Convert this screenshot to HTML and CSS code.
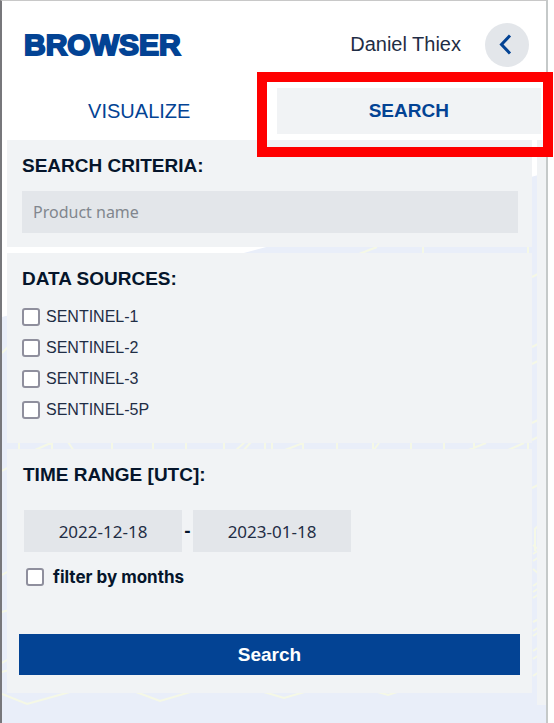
FILE: index.html
```html
<!DOCTYPE html>
<html lang="en">
<head>
<meta charset="utf-8">
<meta name="viewport" content="width=device-width, initial-scale=1">
<title>Browser</title>
<link rel="stylesheet" href="styles.css">
</head>
<body>
<div class="panel">
  <svg class="backdrop" viewBox="0 0 544 722" preserveAspectRatio="none" aria-hidden="true">
    <path fill="#e9eef9" d="M0 316 544 172V722H0Z"/>
    <g fill="none" stroke="#f5f8e6" stroke-width="2">
      <path d="M357 253l18-7M421 244v10M526 244v10M530 276l8-4M530 346l8-4M530 363l8-4M530 422l8-4M530 439l8-4M530 487l8-4M533 550v-22l4-4"/>
      <path d="M17 442v8M33 449l18-8M50 442v8M66 441l6 9M110 442v8M151 442v8M184 442v8M222 442v8M233 450l10-9M241 450l8-9M263 442v8M270 442v8M283 449l18-7v8M335 442v8M371 442v8l6-8M409 442v8M442 442v8M464 450l20-8M472 442v8M506 449l16-7M526 442v8"/>
      <path d="M0 352l6-6M0 470l7-4M0 574l7-4M0 611l7-2M0 662l7-4M0 671l7-2"/>
      <path d="M0 693l25 10 43-12M134 691l24 9 34-10M262 691l20 6 24-7M376 691l10 3 12-4"/>
      <path d="M531 544l6 5-6 4M531 560l6-4M531 568l6 5M531 585l6-4M531 591l6-4M531 597l6-4M531 621l6-3M531 630l6-4M531 635l6-4M531 650l6-4M531 658l6-4M531 675l6-4 0 10"/>
    </g>
  </svg>
  <header class="header">
    <h1 class="brand">BROWSER</h1>
    <span class="user">Daniel Thiex</span>
    <button class="collapse" type="button" aria-label="Collapse panel">
      <svg viewBox="0 0 44 44" width="44" height="44" aria-hidden="true"><path d="M25 12.500 16.500 21.500 25 30.500" fill="none" stroke="#034394" stroke-width="3"/></svg>
    </button>
  </header>
  <nav class="tabs">
    <button class="tab" type="button">VISUALIZE</button>
    <button class="tab tab-active" type="button">SEARCH</button>
  </nav>
  <div class="body">
    <form class="sections">
      <section class="card">
        <h2 class="title"><label for="product">SEARCH CRITERIA:</label></h2>
        <input class="product" id="product" type="text" placeholder="Product name">
      </section>
      <section class="card sources">
        <h2 class="title">DATA SOURCES:</h2>
        <label class="option"><input type="checkbox">SENTINEL-1</label>
        <label class="option"><input type="checkbox">SENTINEL-2</label>
        <label class="option"><input type="checkbox">SENTINEL-3</label>
        <label class="option"><input type="checkbox">SENTINEL-5P</label>
      </section>
      <section class="card range">
        <h2 class="title">TIME RANGE [UTC]:</h2>
        <div class="dates">
          <input class="date" type="text" value="2022-12-18" aria-label="From">
          <span class="dash">-</span>
          <input class="date" type="text" value="2023-01-18" aria-label="To">
        </div>
        <label class="months"><input type="checkbox">filter by months</label>
        <button class="submit" type="button">Search</button>
      </section>
    </form>
    <div class="track"></div>
  </div>
</div>
</body>
</html>
```
FILE: styles.css
```css
* {
  box-sizing: border-box;
}

body {
  margin: 0;
  background: #fff;
  color: #1f2d45;
  font-family: "Liberation Sans", Arial, sans-serif;
  font-size: 16px;
}

button,
input {
  margin: 0;
  border: 0;
  border-radius: 0;
  font: inherit;
}

.panel {
  position: relative;
  min-height: 100vh;
  margin-right: 6px;
  border-top: 1px solid #c8c8c8;
  border-left: 2px solid #77777b;
  border-right: 2px solid #c5c9c9;
}

.backdrop {
  position: absolute;
  z-index: -1;
  top: 0;
  left: 0;
  width: 100%;
  height: 100%;
}

.header {
  display: flex;
  align-items: center;
  height: 87px;
  padding: 0 17px 0 22px;
}

.brand {
  flex: 1;
  margin: 0;
  color: #034394;
  font-size: 30px;
  font-weight: bold;
  -webkit-text-stroke: 2px #034394;
}

.user {
  margin-right: 24px;
  font-size: 20px;
}

.collapse {
  width: 44px;
  height: 44px;
  padding: 0;
  border-radius: 50%;
  background: #e3e6ea;
}

.collapse svg {
  display: block;
}

.tabs {
  display: grid;
  grid-template-columns: 1fr 1fr;
  gap: 5px;
  padding: 0 5px;
}

.tab {
  position: relative;
  height: 46px;
  background: transparent;
  color: #034394;
  font-size: 20px;
}

.tab-active {
  background: #f1f3f5;
  font-size: 19px;
  font-weight: bold;
}

.tab-active::after {
  content: "";
  position: absolute;
  z-index: 1;
  inset: -16px -12px -23px -20px;
  border: 10px solid #f00;
  pointer-events: none;
}

.body {
  display: flex;
  gap: 5px;
  margin-top: 6px;
  padding-left: 5px;
}

.sections {
  display: flex;
  flex: 1;
  flex-direction: column;
  gap: 6px;
  margin-bottom: 12px;
}

.card {
  padding: 15px 14px 14px 15px;
  background: #f1f3f5;
}

.title {
  margin: 0;
  color: #05152b;
  font-size: 19px;
  font-weight: bold;
  line-height: 22px;
}

.product {
  display: block;
  width: 100%;
  height: 42px;
  margin-top: 14px;
  padding: 0 11px;
  background: #e3e6ea;
  font-family: "Noto Sans", sans-serif;
  font-size: 16px;
}

.product::placeholder {
  color: #81868e;
  opacity: 1;
}

.sources {
  padding-bottom: 18px;
}

.sources .title {
  margin-bottom: 11px;
}

input[type="checkbox"] {
  appearance: none;
  width: 18px;
  height: 18px;
  border: 2px solid #8f8f9d;
  border-radius: 3px;
  background: #fff;
}

input[type="checkbox"]:checked {
  background: #034394;
}

.option {
  display: flex;
  align-items: center;
  gap: 6px;
  height: 31px;
}

.range {
  padding: 15px 12px 18px;
}

.range .title {
  padding-left: 4px;
}

.dates {
  display: flex;
  align-items: center;
  margin: 24px 0 0 5px;
}

.date {
  width: 158px;
  height: 42px;
  background: #e3e6ea;
  color: #1f2d45;
  font-family: "Noto Sans", sans-serif;
  font-size: 17px;
  text-align: center;
}

.dash {
  width: 11px;
  color: #05152b;
  font-size: 19px;
  font-weight: bold;
  text-align: center;
}

.months {
  display: flex;
  align-items: center;
  gap: 9px;
  height: 20px;
  margin: 15px 0 0 7px;
  color: #05152b;
  font-family: Inter, sans-serif;
  font-size: 17px;
  font-weight: bold;
}

.submit {
  display: block;
  width: 100%;
  height: 41px;
  margin-top: 47px;
  background: #034394;
  color: #fff;
  font-size: 19px;
  font-weight: bold;
}

.track {
  width: 9px;
  background: #f1f3f5;
}
```
